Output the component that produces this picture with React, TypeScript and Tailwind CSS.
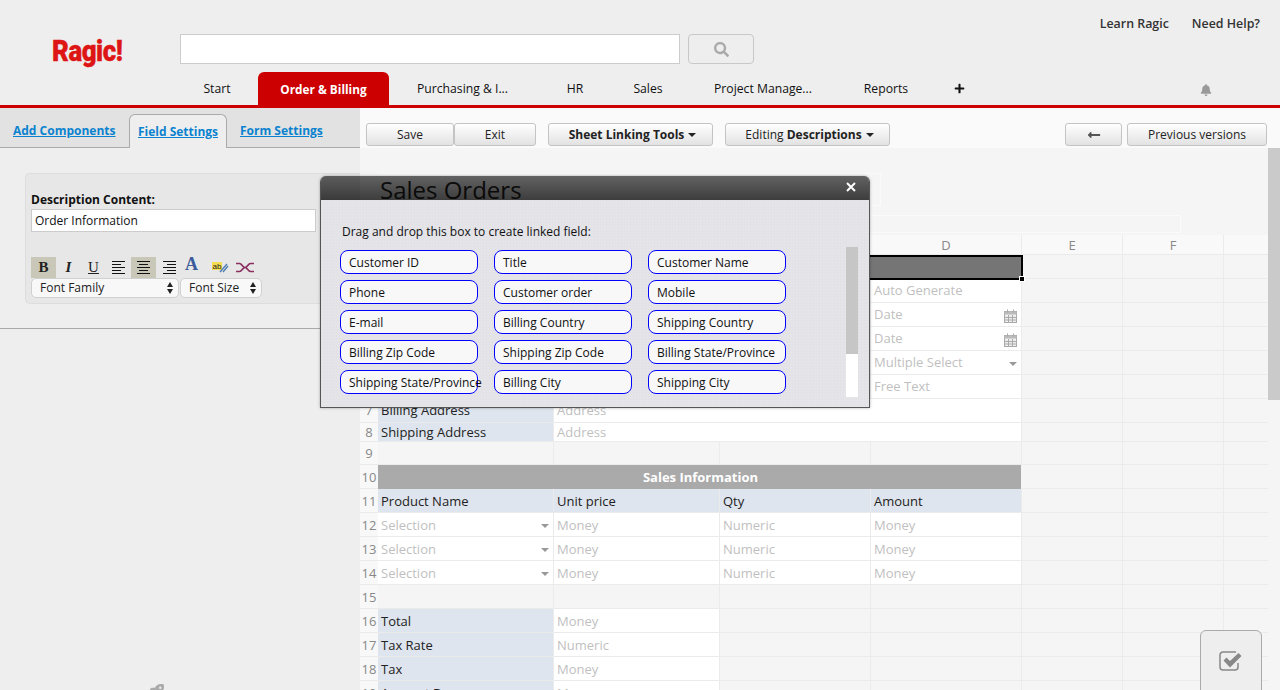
import React from "react";
import { FaBell, FaLongArrowAltLeft, FaPlus, FaRocket, FaSearch } from "react-icons/fa";

const fieldChips = [
  "Customer ID", "Title", "Customer Name",
  "Phone", "Customer order", "Mobile",
  "E-mail", "Billing Country", "Shipping Country",
  "Billing Zip Code", "Shipping Zip Code", "Billing State/Province",
  "Shipping State/Province", "Billing City", "Shipping City",
];

const navTabs = [
  { label: "Start", width: "w-[82px]" },
  { label: "Order & Billing", width: "w-[131px]", active: true },
  { label: "Purchasing & I...", width: "w-[147px]" },
  { label: "HR", width: "w-[78px]" },
  { label: "Sales", width: "w-[68px]" },
  { label: "Project Manage...", width: "w-[162px]" },
  { label: "Reports", width: "w-[84px]" },
];

const btn =
  "h-[23px] flex items-center justify-center border border-[#c4c4c4] rounded-[3px] bg-gradient-to-b from-[#ffffff] to-[#e2e2e2] text-[12px] text-[#222]";

function Caret() {
  return <span className="ml-[4px] inline-block border-x-[4px] border-t-[4px] border-x-transparent border-t-[#222]" />;
}

function CalendarIcon() {
  return (
    <svg width="13" height="14" viewBox="0 0 13 14" className="absolute right-[4px] top-[6px]">
      <rect x="0.5" y="2.5" width="12" height="11" fill="#eee" stroke="#aaa" />
      <rect x="0.5" y="2.5" width="12" height="3" fill="#bbb" />
      <path d="M3.5 0.5v3M9.5 0.5v3M4.5 6v7M8.5 6v7M1 8.5h11M1 11h11" stroke="#aaa" fill="none" />
    </svg>
  );
}

function DropArrow() {
  return <span className="absolute right-[4px] top-[11px] border-x-[4px] border-t-[4px] border-x-transparent border-t-[#999]" />;
}

function AlignIcon({ kind }: { kind: "left" | "center" | "right" }) {
  const paths = {
    left: "M0 0.5h13M0 3.5h9M0 6.500h13M0 9.500h9M0 12.500h13",
    center: "M0 0.5h13M2 3.5h9M0 6.500h13M2 9.500h9M0 12.500h13",
    right: "M0 0.5h13M4 3.5h9M0 6.500h13M4 9.500h9M0 12.500h13",
  };
  return (
    <svg width="13" height="13" viewBox="0 0 13 13">
      <path d={paths[kind]} stroke="#111" strokeWidth="1" fill="none" />
    </svg>
  );
}

function UpDown() {
  return (
    <svg width="6" height="12" viewBox="0 0 6 12" className="ml-auto">
      <path d="M3 0l3 5H0zM3 12l3-5H0z" fill="#222" />
    </svg>
  );
}

function Cell({ w, kind, text, children }: { w: string; kind: "empty" | "label" | "input"; text?: string; children?: React.ReactNode }) {
  const bg = kind === "label" ? "bg-[#dfe5ee] text-[#222]" : kind === "input" ? "bg-white text-[#bfbfbf]" : "bg-[#f5f5f5]";
  return (
    <div className={`${w} relative shrink-0 h-full pl-[3px] flex items-center border-r border-b border-[#ebebeb] text-[13px] ${bg}`}>
      {text}
      {children}
    </div>
  );
}

// low: text sits 1px lower, the rows from 8 down are drawn that way
function SheetRow({ num, h = "h-[24px]", low, children }: { num?: number; h?: string; low?: boolean; children?: React.ReactNode }) {
  return (
    <div className={`flex ${h} ${low ? "[&>div]:pt-[2px]" : ""}`}>
      <div className="w-[18px] shrink-0 flex items-center justify-center bg-[#f8f8f8] border-b border-[#ebebeb] text-[13px] text-[#888]">{num}</div>
      {children}
    </div>
  );
}

// columns E, F and the rest of the sheet, always empty here
function Tail() {
  return (
    <>
      <Cell w="w-[101px]" kind="empty" />
      <Cell w="w-[101px]" kind="empty" />
      <div className="flex-1 border-b border-[#ebebeb] bg-[#f5f5f5]" />
    </>
  );
}

function Sheet() {
  const A = "w-[176px]";
  const B = "w-[166px]";
  const C = "w-[151px]";
  const D = "w-[151px]";
  return (
    <div className="flex flex-col">
      <div className="flex h-[20px] bg-[#f9f9f9] text-[13px] text-[#888] [&>div]:pt-[2px]">
        <div className="w-[511px] border-b border-[#ebebeb]" />
        {[["D", D], ["E", "w-[101px]"], ["F", "w-[101px]"]].map(([name, w]) => (
          <div key={name} className={`${w} flex items-center justify-center border-r border-b border-[#ebebeb]`}>{name}</div>
        ))}
        <div className="flex-1 border-b border-[#ebebeb]" />
      </div>

      <SheetRow>
        <div className="w-[645px] h-[25px] shrink-0 relative z-10 bg-[#757575] border-2 border-black">
          <span className="absolute -right-[3px] -bottom-[3px] w-[4px] h-[4px] bg-black outline outline-1 outline-white" />
        </div>
        <div className="w-[100px] border-r border-b border-[#ebebeb]" />
        <Cell w="w-[101px]" kind="empty" />
        <div className="flex-1 border-b border-[#ebebeb] bg-[#f5f5f5]" />
      </SheetRow>

      {[
        { n: 2, t: "Auto Generate" },
        { n: 3, t: "Date", cal: true },
        { n: 4, t: "Date", cal: true },
        { n: 5, t: "Multiple Select", drop: true },
        { n: 6, t: "Free Text" },
      ].map((r) => (
        <SheetRow key={r.n}>
          <Cell w={A} kind="label" />
          <Cell w={B} kind="input" />
          <Cell w={C} kind="label" />
          <Cell w={D} kind="input" text={r.t}>
            {r.cal && <CalendarIcon />}
            {r.drop && <DropArrow />}
          </Cell>
          <Tail />
        </SheetRow>
      ))}

      <SheetRow num={7}>
        <Cell w={A} kind="label" text="Billing Address" />
        <Cell w="w-[468px]" kind="input" text="Address" />
        <Tail />
      </SheetRow>
      <SheetRow num={8} h="h-[19px]" low>
        <Cell w={A} kind="label" text="Shipping Address" />
        <Cell w="w-[468px]" kind="input" text="Address" />
        <Tail />
      </SheetRow>
      <SheetRow num={9} h="h-[23px]" low>
        <Cell w={A} kind="empty" />
        <Cell w={B} kind="empty" />
        <Cell w={C} kind="empty" />
        <Cell w={D} kind="empty" />
        <Tail />
      </SheetRow>
      <SheetRow num={10} low>
        <div className="w-[644px] shrink-0 pl-[2px] flex items-center justify-center bg-[#aaaaaa] border-r border-[#f5f5f5] text-white text-[13px] font-bold">Sales Information</div>
        <Tail />
      </SheetRow>
      <SheetRow num={11} low>
        <Cell w={A} kind="label" text="Product Name" />
        <Cell w={B} kind="label" text="Unit price" />
        <Cell w={C} kind="label" text="Qty" />
        <Cell w={D} kind="label" text="Amount" />
        <Tail />
      </SheetRow>
      {[12, 13, 14].map((n) => (
        <SheetRow key={n} num={n} low>
          <Cell w={A} kind="input" text="Selection">
            <DropArrow />
          </Cell>
          <Cell w={B} kind="input" text="Money" />
          <Cell w={C} kind="input" text="Numeric" />
          <Cell w={D} kind="input" text="Money" />
          <Tail />
        </SheetRow>
      ))}
      <SheetRow num={15} low>
        <Cell w={A} kind="empty" />
        <Cell w={B} kind="empty" />
        <Cell w={C} kind="empty" />
        <Cell w={D} kind="empty" />
        <Tail />
      </SheetRow>
      {[
        { n: 16, l: "Total", t: "Money" },
        { n: 17, l: "Tax Rate", t: "Numeric" },
        { n: 18, l: "Tax", t: "Money" },
        { n: 19, l: "Amount Due", t: "Money" },
      ].map((r) => (
        <SheetRow key={r.n} num={r.n} low>
          <Cell w={A} kind="label" text={r.l} />
          <Cell w={B} kind="input" text={r.t} />
          <Cell w={C} kind="empty" />
          <Cell w={D} kind="empty" />
          <Tail />
        </SheetRow>
      ))}
    </div>
  );
}

function LinkModal() {
  return (
    <div className="absolute z-20 left-[320px] top-[176px] w-[550px] h-[232px] flex flex-col rounded-t-[6px] overflow-hidden border-x border-b border-[#555] shadow-[0_0_3px_rgba(0,0,0,0.3)]">
      <div className="h-[24px] shrink-0 flex items-center justify-end pr-[12px] bg-gradient-to-b from-[#000000]/60 to-[#000000]/75">
        <svg width="10" height="10" viewBox="0 0 10 10" className="-translate-x-[1px] -translate-y-[1px]">
          <path d="M1 1l8 8M9 1l-8 8" stroke="#fff" strokeWidth="2" fill="none" />
        </svg>
      </div>
      <div className="flex-1 relative pl-[19px] pt-[24px] bg-[#e3e3e8] bg-[repeating-linear-gradient(0deg,rgba(255,255,255,0.08)_0_1px,transparent_1px_3px),repeating-linear-gradient(90deg,rgba(0,0,0,0.008)_0_1px,transparent_1px_3px)]">
        <div className="pl-[2px] text-[12px] leading-[16px] text-[#111]">Drag and drop this box to create linked field:</div>
        <div className="mt-[10px] grid grid-cols-[138px_138px_138px] gap-x-[16px] gap-y-[6px]">
          {fieldChips.map((chip) => (
            <div key={chip} className="h-[24px] pl-[8px] pt-[2px] flex items-center whitespace-nowrap rounded-[8px] border border-[#0000ff] bg-[#f8f8f8] text-[12px] text-[#111]">
              {chip}
            </div>
          ))}
        </div>
        <div className="absolute left-[525px] top-[47px] w-[12px] h-[150px] bg-white">
          <div className="h-[107px] bg-[#c6c6c6]" />
        </div>
      </div>
    </div>
  );
}

export default function App() {
  return (
    <div className="relative w-[1280px] h-[690px] overflow-hidden bg-[#eeeeee] font-['Open_Sans',sans-serif]">
      <header className="h-[108px] flex flex-col border-b-[3px] border-[#cc0000]">
        <div className="h-[72px] flex shrink-0">
          <div className="ml-[52px] mt-[34px] w-[128px] h-[32px] flex items-center">
            <span className="origin-left scale-x-[0.86] text-[30px] font-black tracking-[-0.5px] text-[#dd1515] font-['Roboto',sans-serif] [-webkit-text-stroke:0.4px_#dd1515]">Ragic!</span>
          </div>
          <div className="mt-[34px] w-[500px] h-[30px] bg-white border border-[#cccccc]" />
          <div className="mt-[34px] ml-[8px] w-[66px] h-[30px] flex items-center justify-center rounded-[4px] border border-[#c8c8c8] bg-[#eeeeee]">
            <FaSearch size={15} className="text-[#aaaaaa]" />
          </div>
          <div className="ml-auto mr-[20px] mt-[15px] flex gap-[23px] text-[12.4px] leading-[18px] font-semibold text-[#333]">
            <span>Learn Ragic</span>
            <span>Need Help?</span>
          </div>
        </div>
        <nav className="flex-1 flex pl-[176px] text-[12.2px]">
          {navTabs.map((tab) => (
            <div
              key={tab.label}
              className={`${tab.width} pt-[2px] flex items-center justify-center ${tab.active ? "rounded-t-[6px] bg-[#cc0000] text-white text-[11.8px] font-bold" : "text-[#111]"}`}
            >
              {tab.label}
            </div>
          ))}
          <div className="w-[62px] flex items-center justify-center">
            <FaPlus size={11} className="text-[#111]" />
          </div>
          <div className="ml-auto mr-[68px] flex items-center pt-[3px]">
            <FaBell size={12} className="text-[#999999]" />
          </div>
        </nav>
      </header>

      <div className="flex h-[582px]">
        <aside className="w-[360px] shrink-0 flex flex-col">
          <div className="h-[40px] flex items-end pl-[13px] bg-[#e2e2e2] border-b border-[#aaaaaa] text-[12px] font-bold text-[#0a82cf] underline">
            <span className="mb-[7px] w-[116px]">Add Components</span>
            <span className="-mb-[1px] h-[34px] w-[98px] flex items-center justify-center rounded-t-[6px] border border-b-0 border-[#aaaaaa] bg-[#eeeeee]">Field Settings</span>
            <span className="mb-[7px] ml-[13px]">Form Settings</span>
          </div>
          <div className="ml-[25px] mt-[25px] h-[131px] rounded-l-[5px] border border-r-0 border-[#dddddd] bg-[#e7e7e7] pl-[5px] pt-[18px]">
            <div className="text-[12px] leading-[16px] font-bold text-[#111]">Description Content:</div>
            <div className="mt-[1px] w-[285px] h-[23px] pl-[3px] flex items-center bg-white border border-[#cccccc] text-[12px] text-[#111]">Order Information</div>
            <div className="mt-[25px] flex items-center h-[21px] text-[#222]">
              <span className="w-[25px] h-[21px] flex items-center justify-center bg-[#c9c8b8] font-['Liberation_Serif',serif] font-bold text-[15px]">B</span>
              <span className="w-[25px] h-[21px] flex items-center justify-center font-['Liberation_Serif',serif] italic font-bold text-[15px]">I</span>
              <span className="w-[25px] h-[21px] flex items-center justify-center font-['Liberation_Serif',serif] underline text-[15px]">U</span>
              <span className="w-[25px] h-[21px] flex items-center justify-center"><AlignIcon kind="left" /></span>
              <span className="w-[25px] h-[21px] flex items-center justify-center bg-[#c9c8b8]"><AlignIcon kind="center" /></span>
              <span className="w-[27px] h-[21px] flex items-center justify-center"><AlignIcon kind="right" /></span>
              <span className="w-[17px] h-[21px] flex items-start justify-center font-['Liberation_Serif',serif] font-bold text-[18px] leading-[15px] text-[#3b5b9a]">A</span>
              <svg width="17" height="13" viewBox="0 0 17 13" className="ml-[12px]">
                <rect x="0" y="1" width="10" height="8" fill="#f5dc50" />
                <text x="0.5" y="8" fontSize="8" fill="#222" fontFamily="Liberation Sans">ab</text>
                <path d="M8 11l7-8M11 11l5-6" stroke="#4a7ab0" strokeWidth="1.3" fill="none" />
              </svg>
              <svg width="18" height="11" viewBox="0 0 18 11" className="ml-[7px]">
                <path d="M0 1.500h3.500c2.500 0 3 4 5.500 4s3-4 5.500-4H18M0 9.500h3.500c2.500 0 3-4 5.500-4s3 4 5.500 4H18" stroke="#8a2f5f" strokeWidth="1.700" fill="none" />
              </svg>
            </div>
            <div className="flex gap-[1px] text-[12px] text-[#222]">
              <div className="w-[148px] h-[20px] pl-[8px] pr-[5px] flex items-center rounded-[5px] border border-[#d0d0d0] bg-[#f8f8f8]">Font Family<UpDown /></div>
              <div className="w-[82px] h-[20px] pl-[8px] pr-[5px] flex items-center rounded-[5px] border border-[#d0d0d0] bg-[#f8f8f8]">Font Size<UpDown /></div>
            </div>
          </div>
          <div className="mt-[24px] border-t border-[#aaaaaa]" />
          <div className="flex-1 flex justify-center items-end pr-[47px] translate-y-[-2px]">
            <FaRocket size={15} className="text-[#aaaaaa] translate-y-[11px]" />
          </div>
        </aside>

        <main className="flex-1 min-w-0 flex flex-col bg-[#f5f5f5]">
          <div className="h-[40px] shrink-0 flex items-end pb-[2px] pl-[6px] pr-[13px] bg-[#fafafa]">
            <div className={`${btn} w-[88px] border-[#999999]`}>Save</div>
            <div className={`${btn} w-[82px]`}>Exit</div>
            <div className={`${btn} w-[165px] ml-[12px] pl-[4px] font-bold`}>Sheet Linking Tools<Caret /></div>
            <div className={`${btn} w-[165px] ml-[12px] pl-[4px]`}>Editing&nbsp;<b>Descriptions</b><Caret /></div>
            <div className={`${btn} w-[57px] ml-auto`}><FaLongArrowAltLeft size={14} className="text-[#555]" /></div>
            <div className={`${btn} w-[140px] ml-[5px]`}>Previous versions</div>
          </div>
          <div className="flex-1 min-h-0 flex">
            <div className="flex-1 min-w-0 flex flex-col">
              <div className="h-[87px] shrink-0 pl-[18px] pt-[25px]">
                <div className="w-[503px] h-[33px] pl-[2px] border-r border-y border-[#fafafa]">
                  <h1 className="text-[24px] leading-[32px] text-[#222]">Sales Orders</h1>
                </div>
                <div className="mt-[9px] w-[803px] h-[18px] border-r border-y border-[#fafafa]" />
              </div>
              <Sheet />
            </div>
            <div className="w-[12px] shrink-0">
              <div className="h-[252px] bg-[#cacaca]" />
            </div>
          </div>
        </main>
      </div>

      <LinkModal />

      <div className="absolute z-20 left-[1200px] top-[630px] w-[62px] h-[70px] flex justify-center pt-[20px] rounded-[6px] border border-[#aaaaaa] bg-[#eeeeee]">
        <svg width="24" height="20" viewBox="0 0 24 20">
          <path d="M19 12v4a3 3 0 0 1-3 3H4a3 3 0 0 1-3-3V4a3 3 0 0 1 3-3h13" fill="none" stroke="#888" strokeWidth="1.500" />
          <path d="M4.500 9.500l3-3 3.500 3.500 8.500-8 3 3-11.500 11.500z" fill="#888" />
        </svg>
      </div>
    </div>
  );
}
